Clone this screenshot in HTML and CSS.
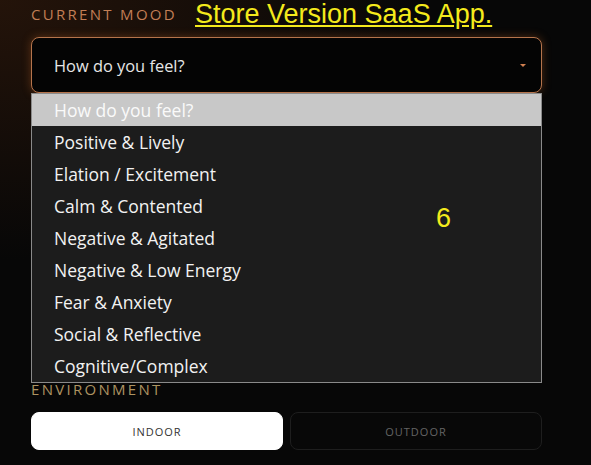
FILE: index.html
```html
<!DOCTYPE html>
<html lang="en">
<head>
    <meta charset="UTF-8">
    <meta name="viewport" content="width=device-width, initial-scale=1.0">
    <title>Mood Picker</title>
    <link rel="stylesheet" href="styles.css">
</head>
<body>
    <div class="panel">
        <div class="head-row">
            <span class="field-label mood-label">Current Mood</span>
            <a class="store-link" href="#">Store Version SaaS App.</a>
        </div>

        <!-- Champ humeur, liste ouverte -->
        <div class="mood-field">
            <div class="select-box">
                <span class="select-value">How do you feel?</span>
                <span class="select-arrow"></span>
            </div>
            <ul class="option-list">
                <li class="option selected">How do you feel?</li>
                <li class="option">Positive &amp; Lively</li>
                <li class="option">Elation / Excitement</li>
                <li class="option">Calm &amp; Contented</li>
                <li class="option">Negative &amp; Agitated</li>
                <li class="option">Negative &amp; Low Energy</li>
                <li class="option">Fear &amp; Anxiety</li>
                <li class="option">Social &amp; Reflective</li>
                <li class="option">Cognitive/Complex</li>
            </ul>
        </div>

        <div class="env-field">
            <span class="field-label env-label">Environment</span>
            <div class="toggle-row">
                <button class="toggle active">Indoor</button>
                <button class="toggle">Outdoor</button>
            </div>
        </div>
    </div>

    <div class="badge-count">6</div>
</body>
</html>
```

FILE: styles.css
```css
body {
    margin: 0;
    height: 465px;
    overflow: hidden;
    font-family: "Open Sans", "Noto Sans", sans-serif;
    background-color: #070707;
    background-image: radial-gradient(ellipse 420px 260px at 0 0, rgba(60, 30, 12, 0.55), rgba(20, 10, 4, 0) 100%);
    color: #eee;
}

.panel {
    width: 511px;
    padding-left: 31px;
}

.head-row {
    display: flex;
    align-items: flex-end;
    gap: 18px;
    height: 31px;
}

.field-label {
    font-size: 15px;
    font-weight: 500;
    letter-spacing: 2.3px;
    text-transform: uppercase;
}

.mood-label {
    color: #c27e55;
    padding-bottom: 7px;
}

.store-link {
    font-family: "Liberation Sans", Arial, sans-serif;
    font-size: 27px;
    color: #f4ea1c;
    text-decoration: underline;
    text-underline-offset: 2px;
    line-height: 31px;
    margin-bottom: 1px;
}

.mood-field {
    position: relative;
    margin-top: 6px;
}

.select-box {
    display: flex;
    align-items: center;
    justify-content: space-between;
    height: 54px;
    padding: 0 15px 0 22px;
    border: 1px solid #b5744c;
    border-radius: 8px;
    background-color: #040404;
    box-shadow: 0 0 10px rgba(210, 110, 40, 0.35);
}

.select-value {
    font-size: 16.4px;
    color: #e6e6e6;
}

.select-arrow {
    width: 0;
    height: 0;
    border-left: 3px solid transparent;
    border-right: 3px solid transparent;
    border-top: 3px solid #d08050;
}

.option-list {
    position: absolute;
    top: 56px;
    left: 0;
    right: 0;
    margin: 0;
    padding: 0;
    list-style: none;
    background-color: #1c1c1c;
    border: 1px solid #8a8a8a;
    z-index: 10;
}

.option {
    height: 32px;
    line-height: 32px;
    padding-left: 22px;
    font-size: 17.5px;
    color: #f2f2f2;
}

.option.selected {
    background-color: #c8c8c8;
    color: #fafafa;
}

.env-field {
    margin-top: 288px;
}

.env-label {
    display: block;
    color: #ad9361;
    line-height: 16px;
}

.toggle-row {
    display: grid;
    grid-template-columns: 1fr 1fr;
    gap: 7px;
    margin-top: 15px;
}

.toggle {
    height: 38px;
    border: 1px solid #1e1e1e;
    border-radius: 8px;
    background-color: #080808;
    color: #646464;
    font-family: "Open Sans", "Noto Sans", sans-serif;
    font-size: 11px;
    font-weight: 500;
    letter-spacing: 1px;
    text-transform: uppercase;
}

.toggle.active {
    background-color: #ffffff;
    border-color: #ffffff;
    color: #333;
}

.badge-count {
    position: absolute;
    left: 436px;
    top: 203px;
    font-family: "Liberation Sans", Arial, sans-serif;
    font-size: 27px;
    color: #f4ea1c;
    z-index: 20;
}
```
